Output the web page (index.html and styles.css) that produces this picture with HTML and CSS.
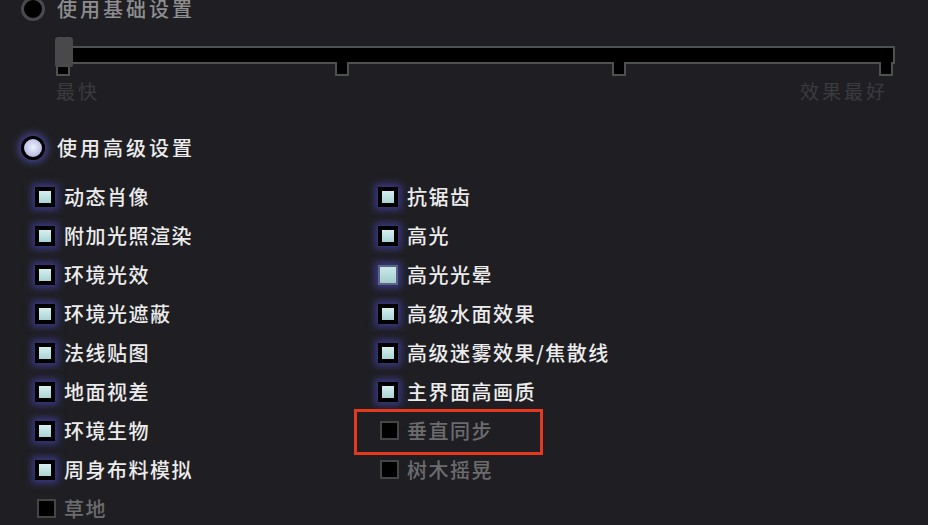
FILE: index.html
```html
<!DOCTYPE html>
<html lang="zh-CN">
<head>
  <meta charset="UTF-8" />
  <title>画面设置</title>
  <link rel="stylesheet" href="styles.css">
</head>
<body>

  <div class="mode-row basic">
    <span class="radio"></span>
    <span class="mode-label">使用基础设置</span>
  </div>

  <div class="slider">
    <div class="track"></div>
    <span class="tick" style="left: 0%"></span>
    <span class="tick" style="left: 33.3%"></span>
    <span class="tick" style="left: 66.3%"></span>
    <span class="tick tick-end"></span>
    <span class="thumb"></span>
  </div>
  <div class="slider-labels">
    <span>最快</span>
    <span>效果最好</span>
  </div>

  <div class="mode-row advanced">
    <span class="radio on"></span>
    <span class="mode-label">使用高级设置</span>
  </div>

  <div class="options">
    <div class="col">
      <label class="opt"><span class="box on"></span>动态肖像</label>
      <label class="opt"><span class="box on"></span>附加光照渲染</label>
      <label class="opt"><span class="box on"></span>环境光效</label>
      <label class="opt"><span class="box on"></span>环境光遮蔽</label>
      <label class="opt"><span class="box on"></span>法线贴图</label>
      <label class="opt"><span class="box on"></span>地面视差</label>
      <label class="opt"><span class="box on"></span>环境生物</label>
      <label class="opt"><span class="box on"></span>周身布料模拟</label>
      <label class="opt off"><span class="box"></span>草地</label>
    </div>
    <div class="col">
      <label class="opt"><span class="box on"></span>抗锯齿</label>
      <label class="opt"><span class="box on"></span>高光</label>
      <label class="opt"><span class="box on hover"></span>高光光晕</label>
      <label class="opt"><span class="box on"></span>高级水面效果</label>
      <label class="opt"><span class="box on"></span>高级迷雾效果/焦散线</label>
      <label class="opt"><span class="box on"></span>主界面高画质</label>
      <label class="opt off marked"><span class="box"></span>垂直同步</label>
      <label class="opt off"><span class="box"></span>树木摇晃</label>
    </div>
  </div>

</body>
</html>
```

FILE: styles.css
```css
body {
  margin: 0;
  background: #1f1f23;
  font-family: "Noto Sans CJK SC", "Noto Sans", sans-serif;
  color: #ececec;
  overflow: hidden;
}

.mode-row {
  display: flex;
  align-items: center;
  height: 24px;
  margin-left: 21px;
}
.basic {
  margin-top: -3px;
}
.advanced {
  margin-top: 34px;
}
.mode-label {
  margin-left: 12px;
  font-size: 20px;
  font-weight: 500;
  letter-spacing: 3px;
  line-height: 24px;
}
.basic .mode-label {
  color: #8e8e90;
}

.radio {
  width: 24px;
  height: 24px;
  box-sizing: border-box;
  border-radius: 50%;
  border: 3px solid #4a4a4e;
  background: #000;
}
.radio.on {
  border-color: #000;
  background: radial-gradient(circle at 50% 45%, #eef0fc 0%, #c4c8ea 55%, #9ea2d2 100%);
  box-shadow: 0 0 7px 3px rgba(90, 88, 210, 0.6);
}

.slider {
  position: relative;
  margin: 25px 33px 0 56px;
  height: 18px;
}
.track {
  height: 18px;
  box-sizing: border-box;
  border: 2px solid #4b524f;
  background: #000;
}
.tick {
  position: absolute;
  top: 16px;
  width: 14px;
  height: 14px;
  box-sizing: border-box;
  border: 2px solid #4b524f;
  border-top: none;
  background: #000;
}
.tick-end {
  right: 2px;
}
.thumb {
  position: absolute;
  top: -9px;
  left: -1px;
  width: 18px;
  height: 30px;
  border-radius: 3px 3px 2px 2px;
  background: #49494b;
}

.slider-labels {
  display: flex;
  justify-content: space-between;
  margin: 16px 40px 0 56px;
  font-size: 19px;
  line-height: 22px;
  letter-spacing: 3px;
  color: #3b3b3f;
}

.options {
  display: flex;
  margin-top: 17px;
  padding-left: 35px;
}
.col {
  display: flex;
  flex-direction: column;
}
.col:first-child {
  width: 343px;
}
.opt {
  position: relative;
  display: flex;
  align-items: center;
  height: 39px;
  font-size: 20px;
  font-weight: 500;
  letter-spacing: 1.5px;
}
.box {
  width: 20px;
  height: 20px;
  box-sizing: border-box;
  margin-right: 9px;
  border: 2px solid #454545;
  background: #000;
}
.box.on {
  border: 4px solid #000;
  background: linear-gradient(#d6f0f0, #a9d3d4);
  box-shadow: 0 0 7px 3px rgba(76, 74, 200, 0.6);
}
.box.on.hover {
  border: 2px solid #5c6486;
  background: linear-gradient(#c8e8e8, #a4cccc);
}
.opt.off {
  color: #6c6c6e;
}
.opt.off .box {
  width: 19px;
  height: 19px;
  margin-left: 2px;
  margin-right: 8px;
}
.marked::after {
  content: "";
  position: absolute;
  left: -24px;
  top: -2px;
  width: 189px;
  height: 46px;
  box-sizing: border-box;
  border: 3px solid #e6381e;
}
```
